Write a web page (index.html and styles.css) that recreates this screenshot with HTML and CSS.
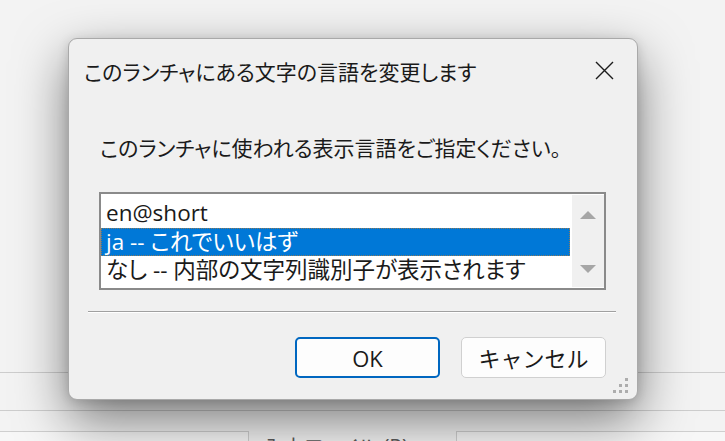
FILE: index.html
```html
<!DOCTYPE html>
<html lang="ja">
<head>
    <meta charset="UTF-8">
    <meta name="viewport" content="width=device-width, initial-scale=1.0">
    <title>言語の変更</title>
    <link rel="stylesheet" href="styles.css">
</head>
<body>
    <!-- 後ろのメインウィンドウ -->
    <div class="app">
        <div class="app-body"></div>
        <div class="app-rule"></div>
        <div class="app-gap"></div>
        <div class="app-rule"></div>
        <div class="app-row">
            <div class="app-field app-field-left"></div>
            <span class="app-label">入力ファイル (P)</span>
            <div class="app-field app-field-right"></div>
        </div>
    </div>

    <!-- 言語選択ダイアログ -->
    <div class="dialog">
        <div class="dialog-title">
            <span class="title-text">このランチャにある文字の言語を変更します</span>
            <svg class="close-icon" viewBox="0 0 19 19" fill="none" stroke="currentColor" stroke-width="1.4">
                <path d="M1 1L18 18M18 1L1 18"/>
            </svg>
        </div>

        <div class="dialog-content">
            <p class="prompt">このランチャに使われる表示言語をご指定ください。</p>

            <div class="listbox">
                <ul class="list-items">
                    <li>en@short</li>
                    <li class="selected">ja -- これでいいはず</li>
                    <li>なし -- 内部の文字列識別子が表示されます</li>
                </ul>
                <div class="scrollbar">
                    <span class="arrow arrow-up"></span>
                    <span class="arrow arrow-down"></span>
                </div>
            </div>

            <div class="separator"></div>

            <div class="buttons">
                <button class="btn btn-default">OK</button>
                <button class="btn">キャンセル</button>
            </div>
        </div>

        <!-- サイズ変更グリップ -->
        <svg class="grip" width="16" height="16" viewBox="0 0 16 16" fill="#adadad">
            <rect x="12" y="0" width="3" height="3"/>
            <rect x="6" y="6" width="3" height="3"/>
            <rect x="12" y="6" width="3" height="3"/>
            <rect x="0" y="12" width="3" height="3"/>
            <rect x="6" y="12" width="3" height="3"/>
            <rect x="12" y="12" width="3" height="3"/>
        </svg>
    </div>
</body>
</html>
```

FILE: styles.css
```css
* {
    margin: 0;
    padding: 0;
    box-sizing: border-box;
}

body {
    width: 725px;
    height: 441px;
    overflow: hidden;
    background: #f3f3f3;
    font-family: "Open Sans", "Noto Sans CJK JP", sans-serif;
    font-feature-settings: "palt";
    color: #1a1a1a;
    position: relative;
}

/* 後ろのウィンドウ */
.app {
    display: flex;
    flex-direction: column;
}

.app > * {
    flex-shrink: 0;
}

.app-body {
    height: 372px;
}

.app-rule {
    height: 1px;
    background: #cdcdcd;
}

.app-gap {
    height: 37px;
}

.app-row {
    display: flex;
    align-items: flex-start;
    margin-top: 20px;
    height: 40px;
}

.app-field {
    height: 40px;
    border: 1px solid #cfcfcf;
    background: #f7f7f7;
}

.app-field-left {
    width: 249px;
    border-left: none;
}

.app-field-right {
    flex: 1;
    border-right: none;
}

.app-label {
    width: 207px;
    padding-left: 14px;
    padding-top: 2px;
    font-size: 21px;
    line-height: 28px;
    color: #5a5a5a;
}

/* ダイアログ */
.dialog {
    position: absolute;
    left: 68px;
    top: 38px;
    width: 570px;
    height: 362px;
    background: #f0f0f0;
    border: 1px solid #a9a9a9;
    border-radius: 9px;
    box-shadow: 0 20px 52px rgba(0,0,0,0.5), 0 2px 12px rgba(0,0,0,0.14);
}

.dialog-title {
    height: 63px;
    display: flex;
    align-items: center;
    justify-content: space-between;
    padding: 2px 23px 0 15px;
}

.title-text {
    font-size: 21px;
    line-height: 28px;
}

.close-icon {
    width: 19px;
    height: 19px;
    color: #1c1c1c;
    margin-top: -3px;
}

.dialog-content {
    padding: 0 31px 0 30px;
}

.prompt {
    margin-top: 32px;
    padding-left: 1px;
    font-size: 21px;
    line-height: 28px;
}

.listbox {
    margin-top: 30px;
    height: 98px;
    display: flex;
    background: #ffffff;
    border: 2px solid #8a8a8a;
}

.list-items {
    flex: 1;
    list-style: none;
    padding-top: 5px;
    padding-right: 2px;
    font-size: 22.5px;
}

.list-items li {
    height: 28.5px;
    line-height: 28.5px;
    padding-left: 5px;
    white-space: nowrap;
}

.list-items li.selected {
    background: #0078d7;
    color: #ffffff;
    outline: 1px dotted #8a7a5c;
    outline-offset: -1px;
}

.scrollbar {
    width: 32px;
    margin: 1px 0;
    background: #f0f0f0;
    display: flex;
    flex-direction: column;
    justify-content: space-between;
    align-items: center;
    padding: 16px 0 14px;
}

.arrow {
    width: 0;
    height: 0;
    border-left: 8px solid transparent;
    border-right: 8px solid transparent;
}

.arrow-up {
    border-bottom: 8px solid #a6a6a6;
}

.arrow-down {
    border-top: 8px solid #a6a6a6;
}

.separator {
    margin: 21px -10px 0 -11px;
    height: 2px;
    border-top: 1px solid #a0a0a0;
    border-bottom: 1px solid #ffffff;
}

.buttons {
    margin-top: 24px;
    display: flex;
    justify-content: flex-end;
    gap: 21px;
}

.btn {
    width: 145px;
    height: 41px;
    background: #fdfdfd;
    border: 1px solid #d0d0d0;
    border-radius: 5px;
    font-family: inherit;
    font-size: 22px;
    color: #1a1a1a;
    line-height: 1;
}

.btn-default {
    border: 2px solid #0067c0;
}

.grip {
    position: absolute;
    right: 8px;
    bottom: 5px;
}
```
